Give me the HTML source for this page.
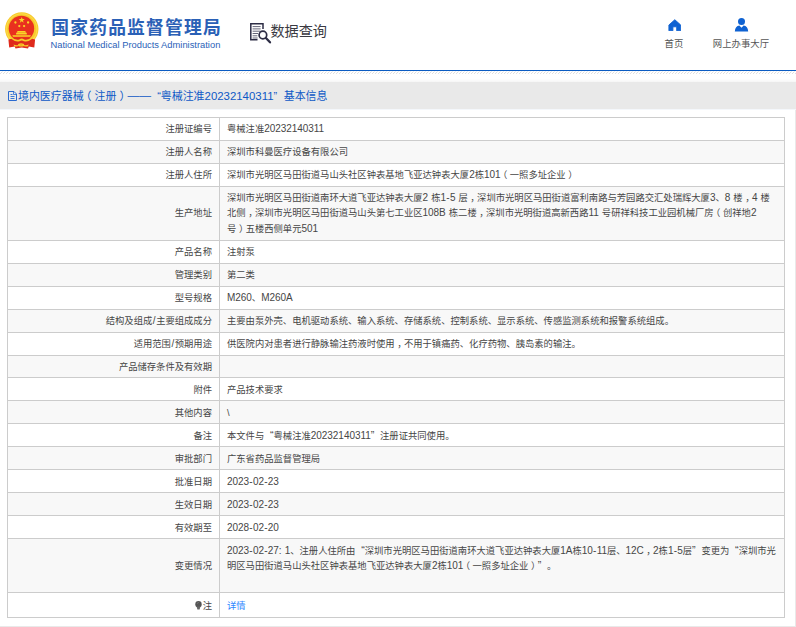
<!DOCTYPE html>
<html lang="zh-CN">
<head>
<meta charset="utf-8">
<title>国家药品监督管理局 数据查询</title>
<style>
html,body{margin:0;padding:0;}
body{width:796px;height:627px;overflow:hidden;background:#fff;position:relative;text-spacing-trim:space-all;
  font-family:"Liberation Sans","Noto Sans CJK SC",sans-serif;color:#333;}
.abs{position:absolute;}
#frame-r{left:795px;top:82px;width:1px;height:545px;background:#e9e9e9;}
#frame-b{left:0;top:626px;width:796px;height:1px;background:#e9e9e9;}
/* header */
#emblem{left:2px;top:10px;width:40px;height:42px;}
#t-cn{left:51.2px;top:14.3px;font-size:17.8px;line-height:28px;font-weight:700;color:#2a60b6;white-space:nowrap;letter-spacing:1.2px;}
#t-en{left:50.5px;top:39.4px;font-size:9.36px;line-height:13px;color:#2a62b8;white-space:nowrap;}
#q-ico{left:248px;top:21px;width:25px;height:24px;}
#q-txt{left:270.4px;top:21.2px;font-size:14.15px;line-height:20px;color:#3a3a42;white-space:nowrap;}
.nav{width:80px;text-align:center;font-size:9.4px;line-height:12px;color:#555;top:37.9px;white-space:nowrap;}
#n1{left:634px;}
#n2{left:701px;}
#i1{left:667.7px;top:18.6px;width:13.6px;height:12.7px;}
#i2{left:734px;top:17px;width:15px;height:15px;}
#blue{left:0;top:70px;width:796px;height:1px;background:#0b5cc2;}
#hatch{left:0;top:71px;width:796px;height:3px;}
#bar{left:0;top:82px;width:796px;height:27px;background:#e9e9e9;}
#bar-g{left:0;top:79px;width:796px;height:3px;background:linear-gradient(#fff,#f5f5f5);}
#bar-u{left:0;top:109px;width:796px;height:1px;background:#f4f7fb;}
#bar-ico{left:0px;top:82px;width:30px;height:27px;}
#bar-txt{left:18px;top:88px;font-size:10.95px;line-height:17px;color:#0d58c6;white-space:nowrap;}
#bar-txt i{font-style:normal;font-size:11.42px;line-height:0;}
/* table */
#tbl{left:7px;top:117px;width:778px;border-collapse:collapse;table-layout:fixed;font-size:9.32px;color:#464646;word-spacing:.5px;line-height:15.5px;}
#tbl td{border:1px solid #ccc;padding:3.8px 6px 2.7px 7px;height:15.5px;white-space:nowrap;vertical-align:middle;overflow:hidden;}
#tbl td.k{width:197px;text-align:right;padding-right:7px;}
#tbl tr.g td{background:#f8f8f8;}
#tbl tr.d td{padding-top:5px;padding-bottom:1.5px;}
#tbl a{color:#2f86ff;text-decoration:none;}
#tbl i{font-style:normal;font-size:10px;letter-spacing:-.05px;line-height:0;}
#tbl b{font-weight:normal;padding:0 .3px;}
.pl,.pr,.pc{position:relative;}
.pl{left:-.28em;}
.pr{left:.28em;}
.pc{left:.27em;}
.ql,.qr{font-size:10.7px;line-height:0;}
.ql{padding-left:5.75px;}
.qr{padding-right:5.75px;}
</style>
</head>
<body>
<div class="abs" id="frame-r"></div>
<div class="abs" id="frame-b"></div>

<svg class="abs" id="emblem" viewBox="0 0 40 42">
  <circle cx="19.75" cy="19.05" r="16.7" fill="#f8ca2a"/>
  <circle cx="19.75" cy="19.05" r="15.2" fill="none" stroke="#fbd94a" stroke-width="1.2"/>
  <circle cx="19.45" cy="18.4" r="12.75" fill="#e9301f"/>
  <path d="M6.4 29.6 L11.5 28.2 L28 28.2 L33.1 29.6 L32.3 37.6 L26.8 36.6 L26 38.6 L19.75 37.4 L13.5 38.6 L12.7 36.6 L7.2 37.6 Z" fill="#df2a1c"/>
  <path d="M8.6 26.4 Q13.4 30.6 17.2 29.4 Q19.75 27.4 22.3 29.4 Q26.1 30.6 30.9 26.4 L30.3 28.8 Q25.6 32.6 21.9 31.2 Q19.75 29.6 17.6 31.2 Q13.9 32.6 9.2 28.8 Z" fill="#f8ca2a"/>
  <ellipse cx="19.1" cy="34.9" rx="3.1" ry="1.6" fill="#f8ca2a"/>
  <ellipse cx="19.1" cy="34.9" rx="1.5" ry="0.6" fill="#e8a81a"/>
  <path d="M11.6 34.6 q2.4 1.1 4.600 0.400 l0.300 1 q-2.400 0.900-4.300 0.200z M26.600 34.600 q-2.400 1.100-4.600 0.400 l-0.300 1 q2.400 0.900 4.300 0.200z" fill="#f8ca2a"/>
  <path d="M19.75 6.900 l0.760 2.200 h2.300 l-1.860 1.400 0.700 2.250 -1.900-1.380 -1.900 1.380 0.700-2.250 -1.860-1.400 h2.300z" fill="#f9d527"/>
  <circle cx="13.4" cy="12.5" r="1.15" fill="#f9d527"/>
  <circle cx="26.1" cy="12.500" r="1.150" fill="#f9d527"/>
  <circle cx="17.3" cy="16.100" r="1.150" fill="#f9d527"/>
  <circle cx="22.100" cy="16.100" r="1.150" fill="#f9d527"/>
  <path d="M15.600 21.100 h7.600 l0.900 1.300 h-9.400z M14.100 22.800 h10.700 v1.800 h-10.700z M10.300 25.300 h18.600 l-0.800 1.500 h-17z" fill="#f9d527"/>
</svg>
<div class="abs" id="t-cn">国家药品监督管理局</div>
<div class="abs" id="t-en">National Medical Products Administration</div>

<svg class="abs" id="q-ico" viewBox="0 0 25 24" fill="none" stroke="#2d2d45">
  <path d="M15 8 V2.800 H2.800 V18.800 H9.500" stroke-width="1.500"/>
  <path d="M4.600 5.600 H12.600 M4.600 7.900 H12.600 M4.600 10.200 H12.600 M4.600 12.500 H10 M4.600 14.800 H9.400 M4.600 17 H9.600" stroke-width="0.900" stroke="#55556a"/>
  <circle cx="14.900" cy="14" r="3.800" stroke-width="1.700" fill="#fff"/>
  <path d="M17.900 17 L22 21.300" stroke-width="2.300" stroke-linecap="round"/>
</svg>
<div class="abs" id="q-txt">数据查询</div>

<svg class="abs" id="i1" viewBox="0 0 15 14"><path d="M7.500 0.800 L14 6.600 V13 H9.600 V8.600 H5.400 V13 H1 V6.600 Z" fill="#0f62d2" stroke="#0f62d2" stroke-width="1" stroke-linejoin="round"/></svg>
<svg class="abs" id="i2" viewBox="0 0 15 15"><circle cx="7.500" cy="4.600" r="3.500" fill="#0f62d2"/><path d="M0.800 14.400 Q1.200 8.800 5.400 8.400 L7.500 10.800 L9.600 8.400 Q13.800 8.800 14.200 14.400 Z" fill="#0f62d2"/></svg>
<div class="abs nav" id="n1">首页</div>
<div class="abs nav" id="n2">网上办事大厅</div>

<div class="abs" id="blue"></div>
<svg class="abs" id="hatch" viewBox="0 0 796 3"><defs><pattern id="hp" width="3" height="3" patternUnits="userSpaceOnUse"><path d="M0 3 L3 0" stroke="#dcdcdc" stroke-width="0.9"/></pattern></defs><rect x="0" y="0.500" width="796" height="2.500" fill="url(#hp)"/></svg>
<div class="abs" id="bar-g"></div>
<div class="abs" id="bar"></div>
<div class="abs" id="bar-u"></div>
<svg class="abs" id="bar-ico" viewBox="0 0 30 27" fill="none" stroke="#2a6ad0" stroke-width="1"><path d="M8.500 9.500 H14 L16.500 12 V18.500 H8.500 Z"/><path d="M13.500 9.500 V12.500 H16.500" stroke-width="0.800"/><path d="M10.500 12.500 H12.500 M10.500 14.500 H14.500 M10.500 16.500 H14.500" stroke-width="0.900"/></svg>
<div class="abs" id="bar-txt">境内医疗器械<span class="pl">（</span>注册<span class="pr">）</span><span style="font-size:11.8px;position:relative;top:-1.5px">——</span><span style="padding-left:6.2px">“</span>粤械注准<i>20232140311</i><span style="padding-right:6.6px">”</span>基本信息</div>

<table class="abs" id="tbl" cellspacing="0" cellpadding="0">
<tr><td class="k">注册证编号</td><td>粤械注准<i>20232140311</i></td></tr>
<tr class="g"><td class="k">注册人名称</td><td>深圳市科曼医疗设备有限公司</td></tr>
<tr><td class="k">注册人住所</td><td>深圳市光明区马田街道马山头社区钟表基地飞亚达钟表大厦<i>2</i>栋<i>101</i><span class="pl">（</span>一照多址企业<span class="pr">）</span></td></tr>
<tr class="g"><td class="k">生产地址</td><td>深圳市光明区马田街道南环大道飞亚达钟表大厦<i>2</i> 栋<i>1<b>-</b>5</i> 层<span class="pc">，</span>深圳市光明区马田街道富利南路与芳园路交汇处瑞辉大厦<i>3</i>、<i>8</i> 楼<span class="pc">，</span><i>4</i> 楼<br>北侧<span class="pc">，</span>深圳市光明区马田街道马山头第七工业区<i>108B</i> 栋二楼<span class="pc">，</span>深圳市光明街道高新西路<i>11</i> 号研祥科技工业园机械厂房<span class="pl">（</span>创祥地<i>2</i><br>号<span class="pr">）</span>五楼西侧单元<i>501</i></td></tr>
<tr><td class="k">产品名称</td><td>注射泵</td></tr>
<tr class="g"><td class="k">管理类别</td><td>第二类</td></tr>
<tr><td class="k">型号规格</td><td><i>M260</i>、<i>M260A</i></td></tr>
<tr class="g"><td class="k">结构及组成<i style="padding:0 .55px">/</i>主要组成成分</td><td>主要由泵外壳、电机驱动系统、输入系统、存储系统、控制系统、显示系统、传感监测系统和报警系统组成。</td></tr>
<tr><td class="k">适用范围<i style="padding:0 .55px">/</i>预期用途</td><td>供医院内对患者进行静脉输注药液时使用<span class="pc">，</span>不用于镇痛药、化疗药物、胰岛素的输注。</td></tr>
<tr class="g"><td class="k" style="padding-bottom:1.7px">产品储存条件及有效期</td><td style="padding-bottom:1.7px"></td></tr>
<tr class="d"><td class="k">附件</td><td>产品技术要求</td></tr>
<tr class="g d"><td class="k">其他内容</td><td>\</td></tr>
<tr class="d"><td class="k">备注</td><td>本文件与<span class="ql">“</span>粤械注准<i>20232140311</i><span class="qr">”</span>注册证共同使用。</td></tr>
<tr class="g d"><td class="k">审批部门</td><td>广东省药品监督管理局</td></tr>
<tr class="d"><td class="k">批准日期</td><td><i>2023<b>-</b>02<b>-</b>23</i></td></tr>
<tr class="g d"><td class="k">生效日期</td><td><i>2023<b>-</b>02<b>-</b>23</i></td></tr>
<tr class="d"><td class="k">有效期至</td><td><i>2028<b>-</b>02<b>-</b>20</i></td></tr>
<tr class="g d"><td class="k">变更情况</td><td><i>2023<b>-</b>02<b>-</b>27:</i> <i>1</i>、注册人住所由<span class="ql">“</span>深圳市光明区马田街道南环大道飞亚达钟表大厦<i>1A</i>栋<i>10<b>-</b>11</i>层、<i>12C</i><span class="pc">，</span><i>2</i>栋<i>1<b>-</b>5</i>层<span class="qr">”</span>变更为<span class="ql">“</span>深圳市光<br>明区马田街道马山头社区钟表基地飞亚达钟表大厦<i>2</i>栋<i>101</i><span class="pl">（</span>一照多址企业<span class="pr">）</span><span class="qr">”</span>。<br>&nbsp;</td></tr>
<tr class="d"><td class="k" style="height:17.5px"><svg width="7" height="9" viewBox="0 0 7 9" style="vertical-align:-1.5px;margin-right:1.2px"><circle cx="3.500" cy="3.300" r="3.200" fill="#555"/><path d="M1.600 5.400 H5.400 L4.600 8.600 H2.400 Z" fill="#666"/><path d="M2.300 2.600 Q2.600 1.600 3.600 1.500" stroke="#999" stroke-width="0.600" fill="none"/></svg>注</td><td><a>详情</a></td></tr>
</table>
</body>
</html>
